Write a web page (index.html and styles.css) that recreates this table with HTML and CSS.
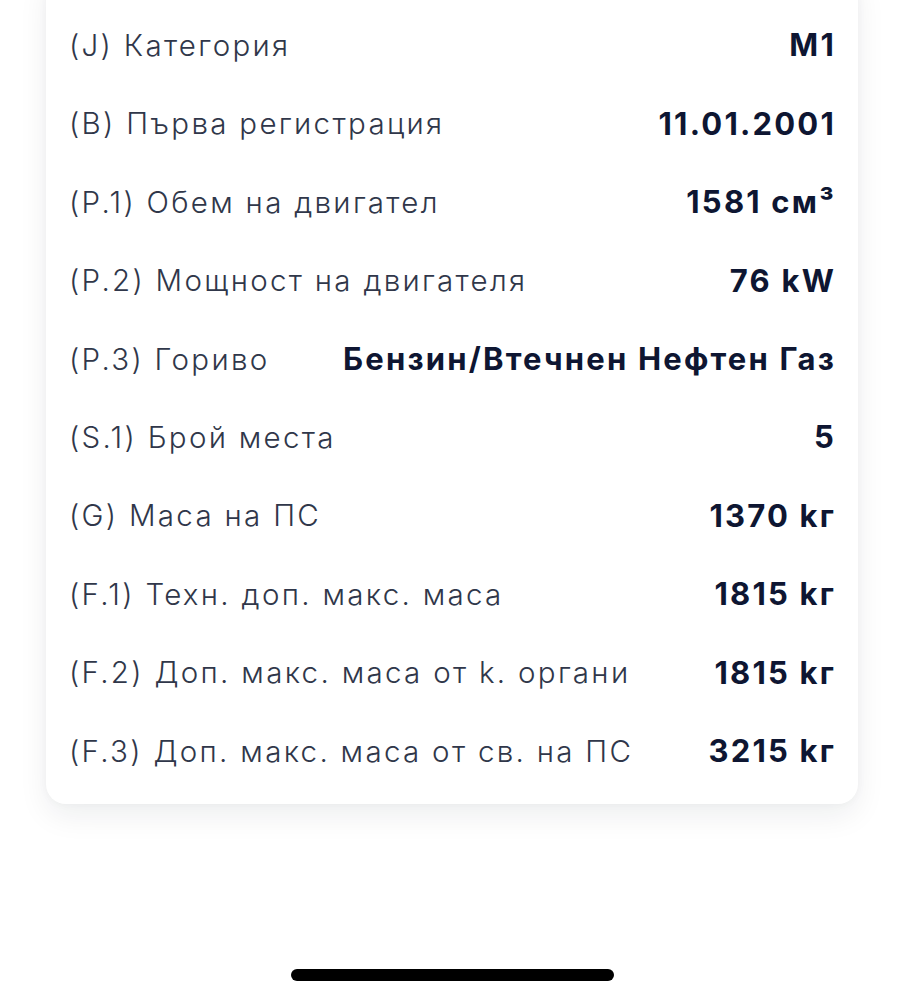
FILE: index.html
```html
<!DOCTYPE html>
<html lang="bg">
<head>
<meta charset="utf-8">
<title>Данни за превозното средство</title>
<link rel="stylesheet" href="styles.css">
</head>
<body>
<main class="screen">
  <section class="card">
    <div class="row"><span class="label">(J) Категория</span><span class="value">M1</span></div>
    <div class="row"><span class="label">(B) Първа регистрация</span><span class="value">11.01.2001</span></div>
    <div class="row"><span class="label">(P.1) Обем на двигател</span><span class="value">1581 см³</span></div>
    <div class="row"><span class="label">(P.2) Мощност на двигателя</span><span class="value">76 kW</span></div>
    <div class="row"><span class="label">(P.3) Гориво</span><span class="value">Бензин/Втечнен Нефтен Газ</span></div>
    <div class="row"><span class="label">(S.1) Брой места</span><span class="value">5</span></div>
    <div class="row"><span class="label">(G) Маса на ПС</span><span class="value">1370 kг</span></div>
    <div class="row"><span class="label">(F.1) Техн. доп. макс. маса</span><span class="value">1815 kг</span></div>
    <div class="row"><span class="label">(F.2) Доп. макс. маса от k. органи</span><span class="value">1815 kг</span></div>
    <div class="row"><span class="label">(F.3) Доп. макс. маса от св. на ПС</span><span class="value">3215 kг</span></div>
  </section>
  <div class="home-indicator"></div>
</main>
</body>
</html>
```
FILE: styles.css
```css
html, body {
  margin: 0;
  padding: 0;
  background: #ffffff;
}
body {
  font-family: Inter, "Noto Sans", sans-serif;
  color: #1c2336;
  overflow: hidden;
}
.screen {
  display: flow-root;
  height: 999px;
  position: relative;
}
.card {
  margin: -30px 47px 0 46px;
  padding: 35.8px 22px 14px 23px;
  background: #ffffff;
  border-radius: 20px;
  box-shadow: 0 12px 30px rgba(20, 25, 40, 0.07), 0 0 10px rgba(20, 25, 40, 0.04);
}
.row {
  display: flex;
  justify-content: space-between;
  align-items: center;
  height: 78.4px;
}
.label {
  font-size: 29.5px;
  font-weight: 300;
  letter-spacing: 2.3px;
  color: #30374a;
  white-space: nowrap;
}
.value {
  font-size: 31px;
  font-weight: 700;
  color: #0e1632;
  white-space: nowrap;
  letter-spacing: 2.2px;
}
.home-indicator {
  position: absolute;
  left: 291px;
  top: 969px;
  width: 323px;
  height: 12px;
  border-radius: 6px;
  background: #000000;
}
```
